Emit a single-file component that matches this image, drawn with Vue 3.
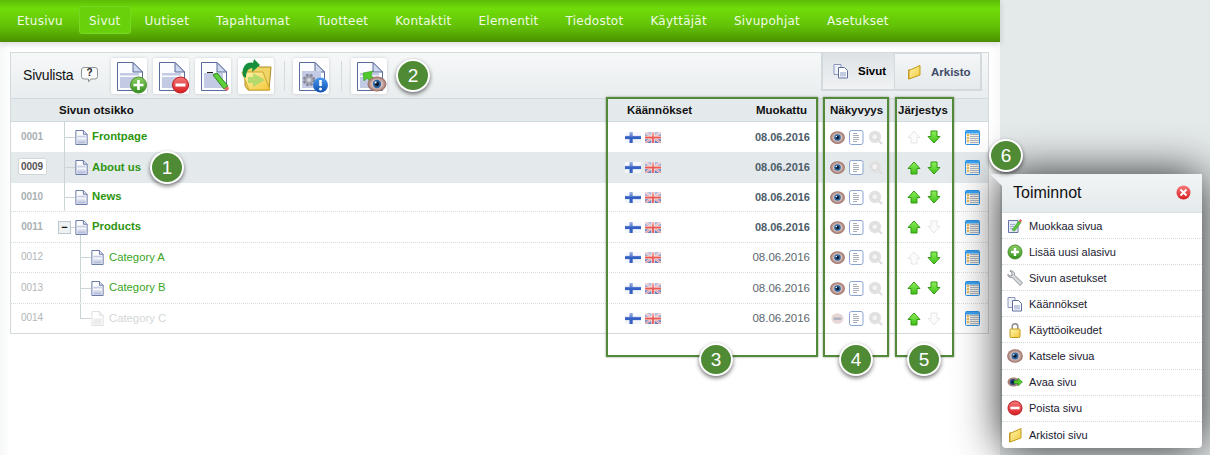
<script setup>
const nav = ['Etusivu','Sivut','Uutiset','Tapahtumat','Tuotteet','Kontaktit','Elementit','Tiedostot','Käyttäjät','Sivupohjat','Asetukset']
const tools = [['i-add'],['i-remove'],['i-edit'],['i-move'],'sep',['i-info'],'sep',['i-preview']]
const rows = [
  { num:'0001', title:'Frontpage', level:0, line:'full', up:false, down:true },
  { num:'0009', title:'About us', level:0, line:'full', up:true, down:true, active:true },
  { num:'0010', title:'News', level:0, line:'full', up:true, down:true },
  { num:'0011', title:'Products', level:0, line:'toggle', up:true, down:false },
  { num:'0012', title:'Category A', level:1, line:'full', up:false, down:true },
  { num:'0013', title:'Category B', level:1, line:'full', up:true, down:true },
  { num:'0014', title:'Category C', level:1, line:'last', up:true, down:false, hidden:true }
]
const menu = [
  ['m-edit','Muokkaa sivua'],['m-add','Lisää uusi alasivu'],['m-wrench','Sivun asetukset'],
  ['m-pages','Käännökset'],['m-lock','Käyttöoikeudet'],['i-eye','Katsele sivua'],
  ['m-open','Avaa sivu'],['m-del','Poista sivu'],['m-folder','Arkistoi sivu']
]
const boxes = ['b3','b4','b5']
const badges = [['1','n1'],['2','n2'],['3','n3'],['4','n4'],['5','n5'],['6','n6']]
</script>

<template>
  <div class="root">
    <svg class="defs" aria-hidden="true">
      <defs>
        <linearGradient id="gPage" x1="0" y1="0" x2="0" y2="1"><stop offset="0" stop-color="#eef1f8"/><stop offset="1" stop-color="#a9b3d6"/></linearGradient>
        <linearGradient id="gGreen" x1="0" y1="0" x2="0" y2="1"><stop offset="0" stop-color="#8fd065"/><stop offset="1" stop-color="#2f8f1e"/></linearGradient>
        <linearGradient id="gRed" x1="0" y1="0" x2="0" y2="1"><stop offset="0" stop-color="#f57a7a"/><stop offset="1" stop-color="#d81c22"/></linearGradient>
        <linearGradient id="gBlue" x1="0" y1="0" x2="0" y2="1"><stop offset="0" stop-color="#4a9af0"/><stop offset="1" stop-color="#0d4fb0"/></linearGradient>
        <linearGradient id="gYellow" x1="0" y1="0" x2="1" y2="1"><stop offset="0" stop-color="#fff6b0"/><stop offset="1" stop-color="#f3c83a"/></linearGradient>
        <linearGradient id="gArrow" x1="0" y1="0" x2="0" y2="1"><stop offset="0" stop-color="#8ef05a"/><stop offset="1" stop-color="#3fbf18"/></linearGradient>
        <radialGradient id="gLid"><stop offset="0.4" stop-color="#e8d8d4"/><stop offset="1" stop-color="#96685e"/></radialGradient>
        <linearGradient id="gGloss" x1="0" y1="0" x2="0" y2="1"><stop offset="0" stop-color="#fff" stop-opacity=".55"/><stop offset="1" stop-color="#fff" stop-opacity=".1"/></linearGradient>

        <symbol id="s-bigpage" viewBox="0 0 36 36">
          <path d="M6.500 4.500H22L31.500 14V32.500H6.500Z" fill="#fbfcff" stroke="#5b6b9b"/>
          <path d="M22 4.500V14H31.500Z" fill="#cfd9ee" stroke="#5b6b9b"/>
        </symbol>
        <symbol id="i-eye" viewBox="0 0 16 16">
          <ellipse cx="8" cy="8" rx="7.900" ry="6.800" fill="url(#gLid)"/>
          <circle cx="8" cy="8" r="3.500" fill="#2f659f"/>
          <circle cx="8" cy="8" r="1.800" fill="#0a1a35"/>
          <circle cx="6.800" cy="6.800" r=".8" fill="#fff"/>
        </symbol>
        <symbol id="i-eye-off" viewBox="0 0 16 16">
          <ellipse cx="8" cy="8" rx="6.500" ry="5.500" fill="#e6d6d6"/>
          <rect x="4" y="7" width="8" height="2.400" fill="#a9afc0"/>
        </symbol>
        <symbol id="i-doc" viewBox="0 0 15 15">
          <rect x=".5" y=".5" width="13.500" height="14" rx="2" fill="#fff" stroke="#8aa3d2"/>
          <path d="M4 3.500h4M4 5.500h6M4 7.500h6M4 9.500h6M4 11.500h4" stroke="#a8afb8" fill="none"/>
        </symbol>
        <symbol id="i-zoom" viewBox="0 0 15 15">
          <circle cx="7" cy="7" r="6.200" fill="#e2e2e2"/>
          <circle cx="6.800" cy="6.800" r="3.200" fill="#f3f3f3" stroke="#d8d8d8"/>
          <path d="M11 11l3 3" stroke="#dcdcdc" stroke-width="2"/>
        </symbol>
        <symbol id="i-up" viewBox="0 0 14 14">
          <path d="M7 1L13 7.500H10V13H4V7.500H1Z" fill="url(#gArrow)" stroke="#359a14"/>
        </symbol>
        <symbol id="i-down" viewBox="0 0 14 14">
          <path d="M7 13L13 6.500H10V1H4V6.500H1Z" fill="url(#gArrow)" stroke="#359a14"/>
        </symbol>
        <symbol id="i-up-off" viewBox="0 0 14 14">
          <path d="M7 1L13 7.500H10V13H4V7.500H1Z" fill="#fbfbfb" stroke="#e6e6e6"/>
        </symbol>
        <symbol id="i-down-off" viewBox="0 0 14 14">
          <path d="M7 13L13 6.500H10V1H4V6.500H1Z" fill="#fbfbfb" stroke="#e6e6e6"/>
        </symbol>
        <symbol id="i-list" viewBox="0 0 15 15">
          <rect x=".5" y=".5" width="14" height="14" rx="1" fill="#f4f1e2" stroke="#2a8fe6"/>
          <rect x="1" y="1" width="13" height="2.500" fill="#3ba2f0"/>
          <path d="M2 5h2M2 8h2M2 11h2" stroke="#f0a020" stroke-width="1.600"/>
          <path d="M5 4.500h9M5 6.500h9M5 8.500h9M5 10.500h9M5 12.500h9" stroke="#a9b2c2"/>
        </symbol>
        <symbol id="f-fi" viewBox="0 0 16 11">
          <rect width="16" height="11" fill="#f2f5fa"/>
          <rect x="4.500" width="3.200" height="11" fill="#3560c4"/>
          <rect y="3.900" width="16" height="3.200" fill="#3560c4"/>
          <rect width="16" height="5" fill="url(#gGloss)"/>
        </symbol>
        <symbol id="f-uk" viewBox="0 0 16 11">
          <rect width="16" height="11" fill="#6a80c0"/>
          <path d="M0 0L16 11M16 0L0 11" stroke="#f4e8e8" stroke-width="2"/>
          <path d="M0 0L16 11M16 0L0 11" stroke="#ea6a6a" stroke-width=".8"/>
          <path d="M8 0V11M0 5.500H16" stroke="#f4e8e8" stroke-width="3.400"/>
          <path d="M8 0V11M0 5.500H16" stroke="#ec5a54" stroke-width="1.800"/>
          <rect width="16" height="5" fill="url(#gGloss)"/>
        </symbol>
        <symbol id="t-page" viewBox="0 0 13 16">
          <path d="M.5 .5H8.500L12.500 4.500V15.500H.5Z" fill="#fff" stroke="#5f6f9f"/>
          <path d="M8.500 .5V4.500H12.500" fill="#dfe5f2" stroke="#5f6f9f"/>
          <rect x="2" y="6" width="9" height="2" fill="#c6cde5"/>
          <rect x="2" y="9" width="9" height="5.500" fill="url(#gPage)"/>
        </symbol>
        <symbol id="t-page-off" viewBox="0 0 13 16">
          <path d="M.5 .5H8.500L12.500 4.500V15.500H.5Z" fill="#fff" stroke="#dedede"/>
          <path d="M8.500 .5V4.500H12.500" fill="#f3f3f3" stroke="#dedede"/>
          <rect x="2" y="8" width="9" height="6.500" fill="#ececec"/>
        </symbol>
        <symbol id="i-add" viewBox="0 0 36 36">
          <use href="#s-bigpage" width="36" height="36"/>
          <rect x="9" y="15" width="19" height="2.500" fill="#c3cae3"/><rect x="9" y="19" width="19" height="11" fill="#c3cae3"/>
          <circle cx="27.500" cy="27" r="8" fill="url(#gGreen)" stroke="#4a8f2e"/>
          <path d="M27.500 22v10M22.500 27h10" stroke="#fff" stroke-width="2.600"/>
        </symbol>
        <symbol id="i-remove" viewBox="0 0 36 36">
          <use href="#s-bigpage" width="36" height="36"/>
          <rect x="9" y="15" width="19" height="2.500" fill="#c3cae3"/><rect x="9" y="19" width="19" height="11" fill="#c3cae3"/>
          <circle cx="27.500" cy="27" r="8" fill="url(#gRed)" stroke="#b81c20"/>
          <rect x="22.500" y="25.500" width="10" height="3" fill="#fff"/>
        </symbol>
        <symbol id="i-edit" viewBox="0 0 36 36">
          <use href="#s-bigpage" width="36" height="36"/>
          <rect x="9" y="15" width="19" height="15" fill="#c3cae3"/>
          <path d="M12 14.500h6" stroke="#222"/>
          <path d="M18 17l4-2 11 13-4 3Z" fill="#5fd03a" stroke="#2c8a1e"/>
          <path d="M29 31l4-3 1 3-2 2Z" fill="#e86a6a"/>
        </symbol>
        <symbol id="i-move" viewBox="0 0 36 36">
          <path d="M7 12V28L10 32H31L33 9H21L18 6H9Z" fill="#f0d468" stroke="#b08a20"/>
          <path d="M4 14H25L32 32H11Z" fill="url(#gYellow)" stroke="#cfa52a"/>
          <path d="M15 15L27 22L15 29V25H10V19H15Z" fill="#a9d86a" opacity=".85"/>
          <path d="M5 18C3 9 9 3 15 5L16 1L22 7L14 14L14.500 10C10 10 8 14 8 20Z" fill="#16903c"/>
        </symbol>
        <symbol id="i-info" viewBox="0 0 36 36">
          <use href="#s-bigpage" width="36" height="36"/>
          <rect x="9" y="13" width="19" height="17" fill="#c3cae3"/>
          <circle cx="16" cy="22" r="5" fill="#a6a8b4" stroke="#85889a" stroke-width="2.500" stroke-dasharray="2.500 1.500"/>
          <circle cx="16" cy="22" r="1.800" fill="#dcdee6"/>
          <circle cx="27.500" cy="27" r="7.500" fill="url(#gBlue)"/>
          <path d="M27.500 22v6" stroke="#fff" stroke-width="2.600"/><circle cx="27.500" cy="31" r="1.500" fill="#fff"/>
        </symbol>
        <symbol id="i-preview" viewBox="0 0 36 36">
          <use href="#s-bigpage" width="36" height="36"/>
          <rect x="9" y="15" width="19" height="2.500" fill="#c3cae3"/><rect x="9" y="19" width="19" height="11" fill="#c3cae3"/>
          <path d="M12 15L22 13L20 17L24 22L20 25L16 20L13 23Z" fill="#4fc82e" stroke="#2f9a1a" stroke-width=".6"/>
          <ellipse cx="26" cy="26" rx="9.500" ry="7.500" fill="url(#gLid)"/>
          <circle cx="26" cy="26" r="4.200" fill="#2f659f"/><circle cx="26" cy="26" r="2.200" fill="#0a1a35"/><circle cx="24.600" cy="24.500" r="1" fill="#fff"/>
        </symbol>
        <symbol id="i-help" viewBox="0 0 17 16">
          <path d="M3 .5H14Q16.500 .5 16.500 3V9.500Q16.500 12 14 12H10L7.500 15V12H3Q.5 12 .5 9.500V3Q.5 .5 3 .5Z" fill="#fbfbfb" stroke="#8f9497"/>
        </symbol>
        <symbol id="i-close" viewBox="0 0 15 15">
          <circle cx="7.500" cy="7.500" r="7" fill="url(#gRed)"/>
          <path d="M4.500 4.500l6 6M10.500 4.500l-6 6" stroke="#fff" stroke-width="2"/>
        </symbol>
        <symbol id="m-edit" viewBox="0 0 16 16">
          <path d="M1.500 2.500H11V14.500H1.500Z" fill="#e4e9f5" stroke="#6676a4"/>
          <path d="M3 6.500h5M3 8.500h4M3 10.500h3" stroke="#a2add0"/>
          <path d="M5 12L12 3l2 1.500L7.500 13Z" fill="#5fc83a" stroke="#2c8a1e" stroke-width=".6"/>
          <path d="M12 3l1-2 2 1.500-1 2Z" fill="#e55"/>
        </symbol>
        <symbol id="m-add" viewBox="0 0 16 16">
          <circle cx="8" cy="8" r="7" fill="url(#gGreen)" stroke="#4a8f2e"/>
          <path d="M8 4v8M4 8h8" stroke="#fff" stroke-width="2.400"/>
        </symbol>
        <symbol id="m-del" viewBox="0 0 16 16">
          <circle cx="8" cy="8" r="7" fill="url(#gRed)" stroke="#b81c20"/>
          <rect x="3.500" y="6.700" width="9" height="2.600" fill="#fff"/>
        </symbol>
        <symbol id="m-wrench" viewBox="0 0 17 17">
          <path d="M1 4.500L3 6.500L5.500 5.500L5 2.500L3 1C6 .2 8.500 2.500 8 5.500L16.500 13.500L14 16.500L5.500 8C3 8.500 .5 7 1 4.500Z" fill="#d6d9dc" stroke="#7e858b" stroke-width=".9"/>
        </symbol>
        <symbol id="m-pages" viewBox="0 0 16 16">
          <path d="M1 1.500H8V11.500H1Z" fill="#eef1f8" stroke="#8b98bb"/>
          <path d="M5.500 4.500H11.500L14.500 7.500V15H5.500Z" fill="#fff" stroke="#5f6f9f"/>
          <rect x="7" y="9" width="6" height="4.500" fill="#c3cae3"/>
        </symbol>
        <symbol id="m-lock" viewBox="0 0 16 16">
          <path d="M5.200 7V4.500a2.800 2.800 0 0 1 5.600 0V7" fill="none" stroke="#8c8f94" stroke-width="1.500"/>
          <rect x="3" y="7" width="10" height="8.500" rx="1.200" fill="url(#gYellow)" stroke="#c29a1a"/>
        </symbol>
        <symbol id="m-open" viewBox="0 0 16 16">
          <ellipse cx="6.500" cy="8" rx="6" ry="4.500" fill="#a98078"/>
          <circle cx="6" cy="8" r="3" fill="#1f4a80"/><circle cx="6" cy="8" r="1.500" fill="#0a1a35"/>
          <path d="M7 6.500H11V4L15.500 8L11 12V9.500H7Z" fill="#55c82e" stroke="#2c8a1e" stroke-width=".6"/>
        </symbol>
        <symbol id="m-folder" viewBox="0 0 16 16">
          <path d="M2 6L4 5V14.500L2 15.500Z" fill="#c79a1e"/>
          <path d="M3 6.500L14 1.500V11L3 15Z" fill="url(#gYellow)" stroke="#c29a1a"/>
        </symbol>
      </defs>
    </svg>

    <main class="main">
      <nav class="nav">
        <a v-for="n in nav" :key="n" class="nav-item" :class="{ on: n === 'Sivut' }">{{ n }}</a>
      </nav>

      <section class="panel">
        <header class="toolbar">
          <span class="title">Sivulista</span>
          <span class="help"><svg width="17" height="16"><use href="#i-help"/></svg><b>?</b></span>
          <div class="tools">
            <template v-for="(t, i) in tools" :key="i">
              <span v-if="t === 'sep'" class="sep"></span>
              <button v-else class="tool"><svg width="36" height="36"><use :href="'#' + t[0]"/></svg></button>
            </template>
          </div>
          <div class="tabs">
            <span class="tab on"><svg width="16" height="16"><use href="#m-pages"/></svg><b>Sivut</b></span>
            <span class="tab"><svg width="16" height="16"><use href="#m-folder"/></svg><b>Arkisto</b></span>
          </div>
        </header>

        <div class="grid head">
          <span></span>
          <span class="h-title">Sivun otsikko</span>
          <span class="h-tr">Käännökset</span>
          <span class="h-date">Muokattu</span>
          <span>Näkyvyys</span>
          <span class="h-order">Järjestys</span>
          <span></span>
        </div>

        <div class="rows">
          <div v-for="r in rows" :key="r.num" class="grid row" :class="{ active: r.active, child: r.level }">
            <span class="num"><i>{{ r.num }}</i></span>
            <span class="tree">
              <template v-if="r.level"><span class="stub"></span><span class="guide child-guide" :class="{ last: r.line === 'last' }"></span></template>
              <template v-else-if="r.line === 'toggle'"><span class="toggle">−</span><span class="dash"></span></template>
              <span v-else class="guide"></span>
              <span class="page-wrap" :class="{ 'has-kids': r.line === 'toggle' }">
                <svg width="13" height="15"><use :href="r.hidden ? '#t-page-off' : '#t-page'"/></svg>
              </span>
              <a class="name" :class="{ off: r.hidden }">{{ r.title }}</a>
            </span>
            <span class="flags">
              <svg width="16" height="11"><use href="#f-fi"/></svg>
              <svg width="16" height="11"><use href="#f-uk"/></svg>
            </span>
            <span class="date">08.06.2016</span>
            <span class="vis">
              <svg width="15" height="15"><use :href="r.hidden ? '#i-eye-off' : '#i-eye'"/></svg>
              <svg width="15" height="15"><use href="#i-doc"/></svg>
              <svg width="15" height="15"><use href="#i-zoom"/></svg>
            </span>
            <span class="order">
              <svg width="14" height="14"><use :href="r.up ? '#i-up' : '#i-up-off'"/></svg>
              <svg width="14" height="14"><use :href="r.down ? '#i-down' : '#i-down-off'"/></svg>
            </span>
            <span class="act"><svg width="15" height="15"><use href="#i-list"/></svg></span>
          </div>
        </div>
      </section>
    </main>

    <span v-for="b in boxes" :key="b" class="box" :class="b"></span>
    <span v-for="b in badges" :key="b[1]" class="badge" :class="b[1]">{{ b[0] }}</span>

    <aside class="pop">
      <span class="tip"></span>
      <div class="pop-head"><span>Toiminnot</span><svg width="15" height="15"><use href="#i-close"/></svg></div>
      <ul>
        <li v-for="m in menu" :key="m[1]"><svg width="16" height="16"><use :href="'#' + m[0]"/></svg>{{ m[1] }}</li>
      </ul>
    </aside>
  </div>
</template>

<style>
html, body { margin: 0; background: #e4e9e9; }
</style>

<style scoped>
.root { position: relative; width: 1210px; height: 455px; overflow: hidden; background: #e4e9e9; font-family: "Liberation Sans", Arial, sans-serif; }
.defs { position: absolute; width: 0; height: 0; }
.main { width: 1000px; height: 455px; background: linear-gradient(90deg, #f6f7f7, #fff 10px, #fff 990px, #f8f9f9); }
.nav { height: 42px; box-sizing: border-box; display: flex; gap: 5px; padding: 6px 0 0 6px; background: linear-gradient(#5cbc07, #70dd0a 22%, #62c007 65%, #4d9400); border-bottom: 1px solid #4c8c00; box-shadow: 0 2px 6px rgba(0,0,0,.15); }
.nav-item { height: 28px; box-sizing: border-box; padding: 0 10px; line-height: 28px; border-radius: 3px; border: 1px solid transparent; color: #f0fae4; font-family: "DejaVu Sans", sans-serif; font-size: 12px; letter-spacing: .25px; }
.nav-item.on { background: #68d10b; border-color: #77d824; padding: 0 9px; margin-right: -2px; }
.panel { margin: 10px 0 0 10px; width: 979px; height: 282px; box-sizing: border-box; border: 1px solid #d2dadd; }
.toolbar { height: 46px; box-sizing: border-box; display: flex; align-items: flex-start; background: linear-gradient(#f6f8f8, #e9edef); border-bottom: 1px solid #d2dadd; position: relative; }
.title { margin: 13px 0 0 12px; font-size: 14px; line-height: 18px; color: #111; width: 53px; letter-spacing: -.2px; }
.help { margin: 14px 0 0 5px; width: 17px; height: 16px; position: relative; display: block; }
.help b { position: absolute; left: 0; top: 0; width: 17px; text-align: center; font-size: 10px; line-height: 12px; color: #222; }
.tools { display: flex; margin: 5px 0 0 13px; }
.tool { width: 36px; height: 36px; padding: 0; margin-right: 6px; background: #fff; border: 0; border-radius: 2px; box-shadow: 0 0 3px rgba(120,130,140,.35); }
.tool:nth-child(4) { margin-left: 1px; }
.tool svg { display: block; }
.sep { width: 1px; height: 30px; margin: 3px 8px 0 4px; background: #d4dadd; }
.sep ~ .sep { margin-left: 6px; margin-right: 9px; }
.tabs { margin-left: auto; margin-right: 6px; display: flex; height: 38px; }
.tab { display: flex; align-items: center; box-sizing: border-box; height: 38px; border: 2px solid #d3d9dc; border-top-width: 1px; background: linear-gradient(#f4f6f7, #e6eaec); font-size: 11.5px; color: #3f4a68; }
.tab svg { margin-right: 9px; }
.tab.on { width: 74px; padding-left: 10px; color: #000; background: linear-gradient(#dde2e5, #f0f2f3); border-right-width: 1px; margin-top: -1px; height: 39px; }
.tab:not(.on) { width: 87px; padding-left: 11px; border-left-width: 0; }
.grid { display: grid; grid-template-columns: 47px 567px 95px 110px 75px 60px 1fr; align-items: center; }
.head { height: 23px; background: #e4e9ec; border-bottom: 1px solid #d2dadd; box-sizing: border-box; font-size: 11.5px; font-weight: bold; color: #111; }
.h-title { padding-left: 1px; }
.h-tr { padding-left: 2px; }
.h-date { text-align: right; padding-right: 23px; }
.h-order { margin-left: -7px; }
.row { height: 30px; background: #fff; box-sizing: border-box; }
.row:nth-child(even) { height: 31px; }
.row:nth-child(3), .row:nth-child(7) { height: 29px; }
.row:nth-child(n+3):nth-child(-n+6) { border-bottom: 1px dotted #d6dcdd; }
.row.active { background: #e4e9ec; }
.num { text-align: center; padding-right: 5px; font-size: 10px; color: #a9b1b4; font-weight: bold; margin-bottom: 2px; }
.num i { font-style: normal; display: inline-block; }
.child .num { font-weight: normal; color: #b0b6b8; }
.active .num i { color: #555; background: #fff; border: 1px solid #d2d8da; border-radius: 2px; width: 27px; height: 15px; line-height: 15px; }
.tree { display: flex; align-items: center; height: 100%; }
.guide { width: 17px; align-self: stretch; background: linear-gradient(#cbd5d7, #cbd5d7) 6px 0 / 1px 100% no-repeat, linear-gradient(#cbd5d7, #cbd5d7) 6px 50% / 11px 1px no-repeat; }
.stub { width: 22px; flex: none; }
.child-guide { width: 11px; background: linear-gradient(#cbd5d7, #cbd5d7) 0 0 / 1px 100% no-repeat, linear-gradient(#cbd5d7, #cbd5d7) 0 50% / 11px 1px no-repeat; }
.child-guide.last { background: linear-gradient(#cbd5d7, #cbd5d7) 0 0 / 1px 50% no-repeat, linear-gradient(#cbd5d7, #cbd5d7) 0 50% / 11px 1px no-repeat; }
.toggle { box-sizing: border-box; width: 13px; height: 13px; border: 1px solid #bcc8cb; background: #eef1f2; font-size: 11px; line-height: 10px; text-align: center; color: #111; font-weight: bold; }
.dash { width: 4px; height: 1px; background: #cbd5d7; }
.page-wrap { display: flex; position: relative; }
.page-wrap svg { display: block; }
.page-wrap.has-kids::after { content: ""; position: absolute; left: 5px; top: 15px; width: 1px; height: 8px; background: #cbd5d7; }
.name { margin: 0 0 2px 4px; font-size: 11.3px; font-weight: bold; color: #2d9510; }
.child .name { margin-left: 5px; font-weight: normal; color: #3aa51c; }
.name.off, .child .name.off { color: #d4d8d8; }
.flags { display: flex; gap: 4px; align-items: center; }
.date { text-align: right; padding-right: 20px; font-size: 11px; font-weight: bold; color: #4c5d6a; margin-bottom: 1px; }
.child .date { font-weight: normal; color: #5c676e; font-size: 11.5px; }
.vis { display: flex; gap: 4px; }
.order { display: flex; gap: 6px; padding-left: 2px; }
.act { display: flex; }
.vis svg, .order svg, .act svg, .flags svg { display: block; }
.box { position: absolute; box-sizing: border-box; top: 97px; height: 260px; border: 2px solid #538a3a; box-shadow: 0 0 2px rgba(60,90,40,.6); }
.b3 { left: 606px; width: 212px; }
.b4 { left: 823px; width: 66px; }
.b5 { left: 895px; width: 59px; }
.badge { position: absolute; z-index: 5; width: 34px; height: 33px; box-sizing: border-box; border: 2px solid #fff; border-radius: 50%; background: #4f8a35; color: #fff; font-size: 19px; line-height: 29px; text-align: center; box-shadow: 0 2px 4px rgba(0,0,0,.55); }
.n1 { left: 150px; top: 151px; }
.n2 { left: 396px; top: 59px; }
.n3 { left: 699px; top: 343px; }
.n4 { left: 839px; top: 343px; }
.n5 { left: 907px; top: 343px; }
.n6 { left: 989px; top: 139px; }
.pop { position: absolute; left: 1002px; top: 174px; width: 200px; height: 274px; background: #fff; border-radius: 0 0 4px 4px; box-shadow: 0 0 45px rgba(0,0,0,.85); z-index: 3; }
.tip { position: absolute; left: -12px; top: 0; width: 0; height: 0; border-top: 12px solid #eef2f3; border-left: 12px solid transparent; }
.pop-head { height: 39px; box-sizing: border-box; display: flex; align-items: center; justify-content: space-between; padding: 0 11px 1px 11px; background: linear-gradient(#f2f5f6, #e4e9eb); border-bottom: 1px solid #dbe1e3; font-size: 16px; color: #111; }
.pop ul { margin: 0; padding: 0; list-style: none; }
.pop li { height: 26.100px; box-sizing: border-box; display: flex; align-items: center; gap: 6px; padding-left: 5px; border-bottom: 1px dotted #d3dadc; font-size: 11px; color: #1a2030; }
.pop li:last-child { border-bottom: 0; }
.pop li svg { flex: none; }
</style>
